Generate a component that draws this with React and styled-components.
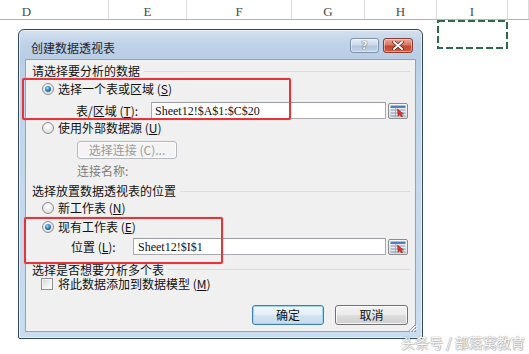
import React from "react";
import styled, { createGlobalStyle } from "styled-components";

const Global = createGlobalStyle`
  html, body { margin: 0; padding: 0; background: #fff; }
  body {
    width: 529px; height: 354px; overflow: hidden;
    font-family: "Noto Sans CJK SC", "Noto Sans", sans-serif;
  }
`;

const Page = styled.div`
  position: relative;
  width: 529px;
  height: 354px;
  overflow: hidden;
  background: #fff;
`;

const HeaderRow = styled.div`
  display: flex;
  height: 20px;
  box-sizing: border-box;
  border-bottom: 1px solid #b4b4b4;
`;

const ColHead = styled.div`
  width: ${(p) => p.$w}px;
  flex: ${(p) => (p.$fill ? "1" : "none")};
  box-sizing: border-box;
  height: 19px;
  padding-top: 5px;
  padding-right: ${(p) => p.$pr || 0}px;
  line-height: 14px;
  text-align: center;
  border-right: 1px solid #dcdcdc;
  font-family: "Liberation Serif", serif;
  font-size: 13px;
  color: #4a4a4a;
`;

const Marquee = styled.svg`
  position: absolute;
  left: 437px;
  top: 20px;
`;

const Dialog = styled.div`
  position: absolute;
  left: 18px;
  top: 29px;
  width: 405px;
  height: 310px;
  box-sizing: border-box;
  border: 1px solid #34485c;
  border-radius: 6px 6px 2px 2px;
  background: linear-gradient(
    to bottom,
    #d3e0ef 0px,
    #bfd2e8 14px,
    #b9cde5 29px,
    #c1d5ea 60px,
    #cadcef 100%
  );
  box-shadow: inset 0 0 0 1px rgba(255, 255, 255, 0.55);
  padding: 0 6px 6px;
  display: flex;
  flex-direction: column;
`;

const TitleBar = styled.div`
  height: 29px;
  flex-shrink: 0;
  display: flex;
  align-items: flex-start;
  padding-left: 6px;
  padding-right: 3px;
`;

const Title = styled.div`
  flex: 1;
  margin-top: 10px;
  font-size: 12px;
  line-height: 16px;
  color: #1c2633;
`;

const CaptionButtons = styled.div`
  display: flex;
  gap: 4px;
  margin-top: 8px;
`;

const CaptionButton = styled.div`
  width: ${(p) => p.$w}px;
  height: 15px;
  box-sizing: border-box;
  border-radius: 3px;
  border: 1px solid ${(p) => (p.$close ? "#8c3a2e" : "#7f90a6")};
  background: ${(p) =>
    p.$close
      ? "linear-gradient(to bottom, #e8a89c 0%, #d97865 45%, #c2462f 55%, #cf5b3f 100%)"
      : "linear-gradient(to bottom, #e7eef7 0%, #cbd8e8 45%, #b2c5dc 55%, #c3d4e8 100%)"};
  box-shadow: inset 0 0 0 1px rgba(255, 255, 255, 0.45);
  display: flex;
  align-items: center;
  justify-content: center;
  font-family: "DejaVu Sans", sans-serif;
  font-weight: bold;
  font-size: 11px;
  line-height: 11px;
  color: #fff;
  text-shadow: 0 0 1px #3a4a5c, 0 0 1px #3a4a5c;
`;

const Client = styled.div`
  flex: 1;
  background: #f0f0f0;
  border: 1px solid #8ea4bc;
  display: flex;
  flex-direction: column;
  color: #111;
  font-size: 12px;
  line-height: 14px;
`;

const Row = styled.div`
  display: flex;
  align-items: center;
  flex-shrink: 0;
  height: ${(p) => p.$h}px;
  margin-top: ${(p) => p.$mt || 0}px;
  padding-left: ${(p) => p.$pl || 0}px;
  padding-right: ${(p) => p.$pr || 0}px;
  justify-content: ${(p) => (p.$end ? "flex-end" : "flex-start")};
  gap: ${(p) => p.$gap || 0}px;
  white-space: nowrap;
`;

const Rule = styled.div`
  flex: 1;
  height: 1px;
  margin-left: 4px;
  background: #d8dde3;
`;

const Radio = styled.span`
  width: 12px;
  height: 12px;
  flex-shrink: 0;
  box-sizing: border-box;
  border-radius: 50%;
  border: 1px solid #8f9092;
  background: radial-gradient(circle at 50% 35%, #ffffff 0%, #e6e6e6 60%, #cfcfcf 100%);
  display: inline-flex;
  align-items: center;
  justify-content: center;
  margin-right: 4px;
  &::after {
    content: "";
    display: ${(p) => (p.$checked ? "block" : "none")};
    width: 6px;
    height: 6px;
    border-radius: 50%;
    background: radial-gradient(circle at 40% 35%, #a9dcf7 0%, #2f82c4 45%, #0b3560 100%);
  }
`;

const Check = styled.span`
  width: 12px;
  height: 12px;
  flex-shrink: 0;
  box-sizing: border-box;
  border: 1px solid #8f9092;
  background: linear-gradient(135deg, #d4d4d4 0%, #f2f2f2 60%, #ffffff 100%);
  box-shadow: inset 0 0 0 1px #f6f6f6;
  margin-right: 5px;
`;

const Label = styled.span`
  display: inline-block;
  width: ${(p) => (p.$w ? `${p.$w}px` : "auto")};
  color: ${(p) => (p.$muted ? "#7d7d7d" : "#111")};
  flex-shrink: 0;
`;

const Key = styled.u`
  text-decoration-thickness: 1px;
  text-underline-offset: 1px;
`;

const Field = styled.div`
  width: ${(p) => p.$w}px;
  height: 17px;
  box-sizing: border-box;
  background: #fff;
  border: 1px solid #a9abb0;
  border-top-color: #9a9ca2;
  padding-left: ${(p) => p.$pad || 3}px;
  display: flex;
  align-items: center;
  font-family: "Liberation Serif", serif;
  font-size: 12px;
  color: #111;
`;

const RangeButton = styled.div`
  width: 20px;
  height: 16px;
  margin-left: 2px;
  box-sizing: border-box;
  border: 1px solid #8c8c8c;
  border-radius: 2px;
  background: linear-gradient(to bottom, #fbfbfb 0%, #ececec 50%, #dcdcdc 100%);
  display: flex;
  align-items: center;
  justify-content: center;
`;

const PushButton = styled.div`
  width: ${(p) => p.$w}px;
  height: ${(p) => p.$h || 20}px;
  box-sizing: border-box;
  border-radius: 3px;
  border: 1px solid ${(p) => (p.$disabled ? "#b5b9bd" : p.$default ? "#3c7fb1" : "#707070")};
  background: ${(p) =>
    p.$disabled
      ? "#f4f4f4"
      : p.$default
      ? "linear-gradient(to bottom, #f2f8fc 0%, #e4eff8 48%, #d3e4f1 52%, #c6dcee 100%)"
      : "linear-gradient(to bottom, #f3f3f3 0%, #ebebeb 48%, #dddddd 52%, #cfcfcf 100%)"};
  box-shadow: ${(p) =>
    p.$default ? "inset 0 0 0 1px #9fd6f4" : "inset 0 0 0 1px rgba(255,255,255,0.8)"};
  display: flex;
  align-items: center;
  justify-content: center;
  color: ${(p) => (p.$disabled ? "#9a9a9a" : "#111")};
  font-size: 12px;
`;

const Annotation = styled.div`
  position: absolute;
  left: ${(p) => p.$x}px;
  top: ${(p) => p.$y}px;
  width: ${(p) => p.$w}px;
  height: ${(p) => p.$h}px;
  box-sizing: border-box;
  border: 2px solid #e5353a;
  border-radius: 2px;
  box-shadow: 0 0 1px rgba(229, 53, 58, 0.6);
  pointer-events: none;
`;

const Grip = styled.svg`
  position: absolute;
  right: 5px;
  bottom: 6px;
`;

const Watermark = styled.div`
  position: absolute;
  left: 401px;
  top: 333px;
  font-size: 14px;
  line-height: 18px;
  white-space: nowrap;
  color: rgba(255, 255, 255, 0.95);
  text-shadow: 0 0 1px #9a9a9a, 0 0 1px #9a9a9a, 1px 1px 1px rgba(0, 0, 0, 0.2);
`;

const RangeIcon = () => (
  <svg width="16" height="12" viewBox="0 0 16 12">
    <rect x="0.5" y="0.5" width="15" height="2.5" fill="#4f7fc0" />
    <rect x="0.5" y="4.5" width="15" height="1" fill="#7b97bd" />
    <rect x="0.5" y="7.5" width="15" height="1" fill="#7b97bd" />
    <rect x="0.5" y="10.5" width="15" height="1" fill="#7b97bd" />
    <rect x="5" y="3" width="1" height="9" fill="#9fb3cf" />
    <path d="M7.5 4 L13.5 9 L11 9.3 L12.6 11.8 L11.5 12 L9.9 9.6 L8.1 11.2 Z" fill="#e0302a" stroke="#8e1a14" strokeWidth="0.5" />
  </svg>
);

const SectionTitle = ({ children, h, mt }) => (
  <Row $h={h} $mt={mt} $pl={6} $pr={5}>
    <Label>{children}</Label>
    <Rule />
  </Row>
);

export default function App() {
  return (
    <Page>
      <Global />
      <HeaderRow>
        <ColHead $w={109} $pr={55}>D</ColHead>
        <ColHead $w={78}>E</ColHead>
        <ColHead $w={105}>F</ColHead>
        <ColHead $w={73}>G</ColHead>
        <ColHead $w={72}>H</ColHead>
        <ColHead $w={71}>I</ColHead>
        <ColHead $fill />
      </HeaderRow>

      <Marquee width="72" height="30" viewBox="0 0 72 30">
        <rect x="1" y="1" width="69" height="27" fill="none" stroke="#2e6a4c" strokeWidth="2" strokeDasharray="7 3" />
      </Marquee>

      <Dialog>
        <TitleBar>
          <Title>创建数据透视表</Title>
          <CaptionButtons>
            <CaptionButton $w={29}>?</CaptionButton>
            <CaptionButton $w={30} $close>
              <svg width="12" height="9" viewBox="0 0 12 9">
                <path d="M2 1 L10 8 M10 1 L2 8" stroke="#5a1e14" strokeWidth="3.4" strokeLinecap="round" />
                <path d="M2 1 L10 8 M10 1 L2 8" stroke="#ffffff" strokeWidth="2" strokeLinecap="round" />
              </svg>
            </CaptionButton>
          </CaptionButtons>
        </TitleBar>

        <Client>
          <SectionTitle h={18} mt={2}>请选择要分析的数据</SectionTitle>
          <Row $h={18} $pl={16}>
            <Radio $checked />
            <Label>选择一个表或区域 (<Key>S</Key>)</Label>
          </Row>
          <Row $h={17} $mt={4} $pl={50}>
            <Label $w={75}>表/区域 (<Key>T</Key>):</Label>
            <Field $w={235} $pad={3}>Sheet12!$A$1:$C$20</Field>
            <RangeButton><RangeIcon /></RangeButton>
          </Row>
          <Row $h={18} $pl={16}>
            <Radio />
            <Label>使用外部数据源 (<Key>U</Key>)</Label>
          </Row>
          <Row $h={18} $mt={4} $pl={51}>
            <PushButton $w={100} $h={18} $disabled>选择连接 (C)...</PushButton>
          </Row>
          <Row $h={18} $mt={3} $pl={51}>
            <Label $muted>连接名称:</Label>
          </Row>

          <SectionTitle h={18} mt={2}>选择放置数据透视表的位置</SectionTitle>
          <Row $h={16} $pl={16}>
            <Radio />
            <Label>新工作表 (<Key>N</Key>)</Label>
          </Row>
          <Row $h={18} $mt={2} $pl={16}>
            <Radio $checked />
            <Label>现有工作表 (<Key>E</Key>)</Label>
          </Row>
          <Row $h={17} $mt={2} $pl={45}>
            <Label $w={62}>位置 (<Key>L</Key>):</Label>
            <Field $w={253} $pad={4}>Sheet12!$I$1</Field>
            <RangeButton><RangeIcon /></RangeButton>
          </Row>

          <SectionTitle h={15} mt={7}>选择是否想要分析多个表</SectionTitle>
          <Row $h={14} $pl={15}>
            <Check />
            <Label>将此数据添加到数据模型 (<Key>M</Key>)</Label>
          </Row>

          <Row $h={20} $mt={14} $pr={7} $end $gap={11}>
            <PushButton $w={72} $default>确定</PushButton>
            <PushButton $w={73}>取消</PushButton>
          </Row>
        </Client>

        <Grip width="10" height="10" viewBox="0 0 10 10">
          <path d="M9 2 L2 9 M9 5 L5 9 M9 8 L8 9" stroke="#8a9bb0" strokeWidth="1" />
          <path d="M10 3 L3 10 M10 6 L6 10" stroke="#ffffff" strokeWidth="0.8" />
        </Grip>
      </Dialog>

      <Annotation $x={22} $y={78} $w={269} $h={42} />
      <Annotation $x={24} $y={217} $w={199} $h={47} />

      <Watermark>头条号 / 部落窝教育</Watermark>
    </Page>
  );
}
